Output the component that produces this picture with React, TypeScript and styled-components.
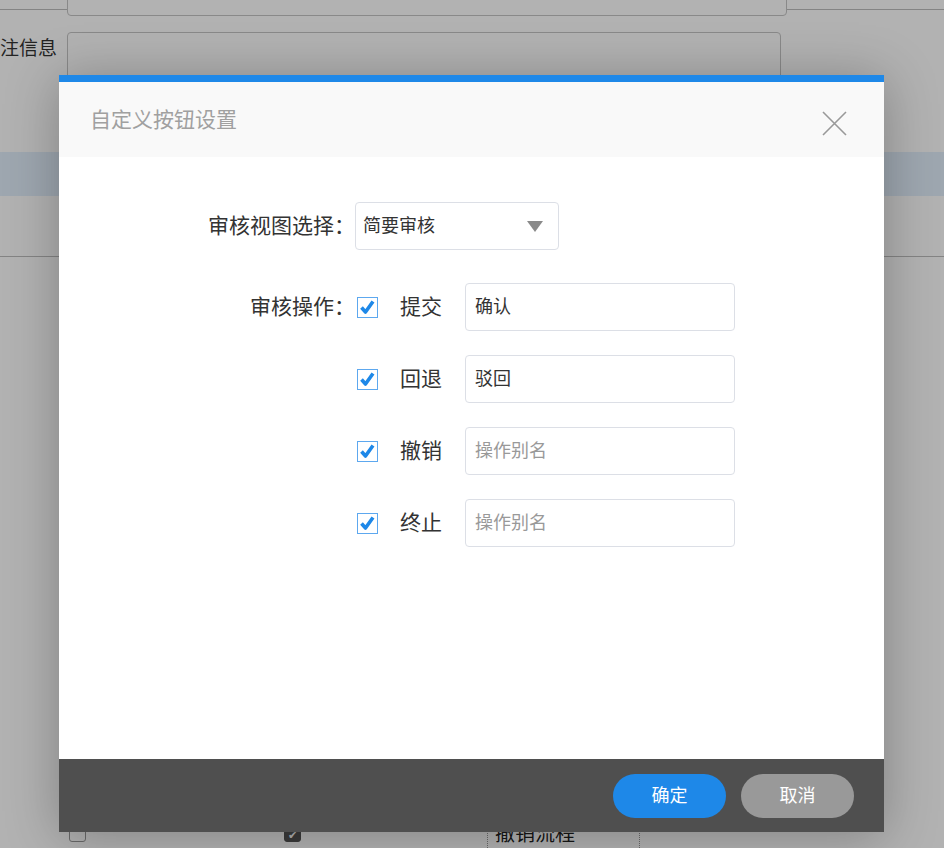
import React from 'react';
import styled, { createGlobalStyle } from 'styled-components';

const GlobalStyle = createGlobalStyle`
  html, body {
    margin: 0;
    padding: 0;
  }
  body {
    font-family: "Noto Sans CJK SC", "Noto Sans", sans-serif;
    background: #fff;
    overflow: hidden;
  }
`;

// page behind the dialog
const Page = styled.div`
  position: relative;
  width: 944px;
  height: 848px;
  overflow: hidden;
  background: #fff;
  color: #333;
`;

const TopRule = styled.div`
  display: flow-root;
  height: 9px;
  border-bottom: 1px solid #bdbdbd;
  padding-left: 67px;
`;

const TopField = styled.div`
  position: relative;
  box-sizing: border-box;
  width: 720px;
  height: 40px;
  margin-top: -24px;
  border: 1px solid #c4c4c4;
  border-radius: 4px;
  background: #fff;
`;

const RemarkRow = styled.div`
  display: flex;
  align-items: flex-start;
  margin-top: 22px;
`;

const RemarkLabel = styled.div`
  width: 57px;
  margin-top: 3px;
  text-align: right;
  white-space: nowrap;
  direction: rtl;
  font-size: 19px;
  line-height: 24px;
`;

const RemarkBox = styled.div`
  box-sizing: border-box;
  width: 714px;
  height: 100px;
  margin-left: 10px;
  border: 1px solid #c4c4c4;
  border-radius: 4px;
`;

const SelectedBand = styled.div`
  height: 44px;
  margin-top: 20px;
  background: #e2f0fc;
`;

const PlainRow = styled.div`
  height: 60px;
  border-bottom: 1px solid #bdbdbd;
`;

const TableRow = styled.div`
  display: grid;
  grid-template-columns: 215px 272px 152px 1fr;
  height: 44px;
  margin-top: 553px;
`;

const Cell = styled.div<{ $dotted?: boolean; $pad: number }>`
  display: flex;
  align-items: center;
  padding-left: ${(p) => p.$pad}px;
  border-left: ${(p) => (p.$dotted ? '1px dotted #999' : 'none')};
  font-size: 20px;
  color: #222;
`;

const SmallBox = styled.span<{ $checked?: boolean }>`
  display: inline-flex;
  align-items: center;
  justify-content: center;
  box-sizing: border-box;
  width: 17px;
  height: 16px;
  margin-top: 4px;
  border: 1px solid ${(p) => (p.$checked ? '#555' : '#999')};
  border-radius: 3px;
  background: ${(p) => (p.$checked ? '#555' : '#fff')};
  color: #fff;
  font-size: 11px;
`;

// overlay and dialog
const Overlay = styled.div`
  position: absolute;
  inset: 0;
  display: flex;
  justify-content: flex-start;
  align-items: flex-start;
  padding: 75px 0 0 59px;
  background: rgba(0, 0, 0, 0.3);
`;

const Dialog = styled.div`
  width: 825px;
  border-top: 7px solid #1e88e8;
  background: #fff;
  box-shadow: 0 4px 50px rgba(0, 0, 0, 0.28);
`;

const DialogHeader = styled.div`
  display: flex;
  align-items: center;
  justify-content: space-between;
  height: 75px;
  padding: 0 37px 0 31px;
  background: #f9f9f9;
`;

const DialogTitle = styled.div`
  margin-top: -3px;
  font-size: 21px;
  color: #a0a0a0;
`;

const CloseButton = styled.button`
  display: flex;
  padding: 0;
  margin-top: 8px;
  border: none;
  background: none;
  cursor: pointer;
`;

const DialogBody = styled.div`
  box-sizing: border-box;
  height: 602px;
  padding-top: 45px;
`;

const FormRow = styled.div<{ $gap: number }>`
  display: grid;
  grid-template-columns: 296px auto;
  align-items: center;
  margin-bottom: ${(p) => p.$gap}px;
`;

const FieldLabel = styled.div`
  margin-top: -4px;
  text-align: right;
  font-size: 21px;
  line-height: 1;
  color: #333;
`;

const Select = styled.div`
  box-sizing: border-box;
  display: flex;
  align-items: center;
  justify-content: space-between;
  width: 204px;
  height: 48px;
  padding: 0 15px 0 7px;
  border: 1px solid #dcdfe6;
  border-radius: 4px;
  font-size: 18px;
  color: #333;
`;

const SelectText = styled.span`
  margin-top: -4px;
`;

const OpItem = styled.div`
  display: flex;
  align-items: center;
`;

const CheckMark = styled.span`
  display: flex;
  margin-left: 2px;
  margin-right: 22px;
`;

const OpName = styled.span`
  width: 65px;
  margin-top: -4px;
  font-size: 21px;
  line-height: 1;
  color: #333;
`;

const AliasInput = styled.input`
  box-sizing: border-box;
  width: 270px;
  height: 48px;
  padding: 0 9px 4px;
  border: 1px solid #dcdfe6;
  border-radius: 4px;
  outline: none;
  font-family: "Noto Sans CJK SC", "Noto Sans", sans-serif;
  font-size: 18px;
  color: #333;

  &::placeholder {
    color: #999;
  }
`;

const DialogFooter = styled.div`
  display: flex;
  align-items: center;
  justify-content: flex-end;
  gap: 15px;
  height: 73px;
  padding-right: 30px;
  background: #4f4f4f;
`;

const FooterButton = styled.button<{ $primary?: boolean }>`
  width: 113px;
  height: 44px;
  padding: 0 0 3px;
  border: none;
  border-radius: 22px;
  background: ${(p) => (p.$primary ? '#1e88e8' : '#999')};
  color: #fff;
  font-family: "Noto Sans CJK SC", "Noto Sans", sans-serif;
  font-size: 18px;
  cursor: pointer;
`;

const BlueCheck = () => (
  <svg width="21" height="21" viewBox="0 0 21 21">
    <rect x="0.5" y="0.5" width="20" height="20" fill="#fff" stroke="#8cc3f7" />
    <rect x="0.5" y="0.5" width="20" height="20" fill="none" stroke="#2f8de6" strokeDasharray="1 1" />
    <path d="M4.5 10.5 L8.5 15 L16 4.5" fill="none" stroke="#1e88e8" strokeWidth="3.6" strokeLinejoin="round" />
  </svg>
);

const operations = [
  { name: '提交', value: '确认' },
  { name: '回退', value: '驳回' },
  { name: '撤销', value: '' },
  { name: '终止', value: '' },
];

export default function App() {
  return (
    <Page>
      <GlobalStyle />
      <TopRule>
        <TopField />
      </TopRule>
      <RemarkRow>
        <RemarkLabel>备注信息</RemarkLabel>
        <RemarkBox />
      </RemarkRow>
      <SelectedBand />
      <PlainRow />
      <TableRow>
        <Cell $pad={69}>
          <SmallBox />
        </Cell>
        <Cell $pad={69}>
          <SmallBox $checked>✔</SmallBox>
        </Cell>
        <Cell $dotted $pad={7}>撤销流程</Cell>
        <Cell $dotted $pad={0} />
      </TableRow>

      <Overlay>
        <Dialog>
          <DialogHeader>
            <DialogTitle>自定义按钮设置</DialogTitle>
            <CloseButton aria-label="close">
              <svg width="25" height="25" viewBox="0 0 25 25">
                <path d="M1 1 L24 24 M24 1 L1 24" stroke="#999" strokeWidth="1.6" fill="none" />
              </svg>
            </CloseButton>
          </DialogHeader>

          <DialogBody>
            <FormRow $gap={33}>
              <FieldLabel>审核视图选择：</FieldLabel>
              <Select>
                <SelectText>简要审核</SelectText>
                <svg width="16" height="11" viewBox="0 0 16 11">
                  <path d="M0 0 H16 L8 11 Z" fill="#8a8a8a" />
                </svg>
              </Select>
            </FormRow>

            {operations.map((op, i) => (
              <FormRow $gap={24} key={op.name}>
                <FieldLabel>{i === 0 ? '审核操作：' : ''}</FieldLabel>
                <OpItem>
                  <CheckMark>
                    <BlueCheck />
                  </CheckMark>
                  <OpName>{op.name}</OpName>
                  <AliasInput defaultValue={op.value} placeholder="操作别名" readOnly />
                </OpItem>
              </FormRow>
            ))}
          </DialogBody>

          <DialogFooter>
            <FooterButton $primary>确定</FooterButton>
            <FooterButton>取消</FooterButton>
          </DialogFooter>
        </Dialog>
      </Overlay>
    </Page>
  );
}
